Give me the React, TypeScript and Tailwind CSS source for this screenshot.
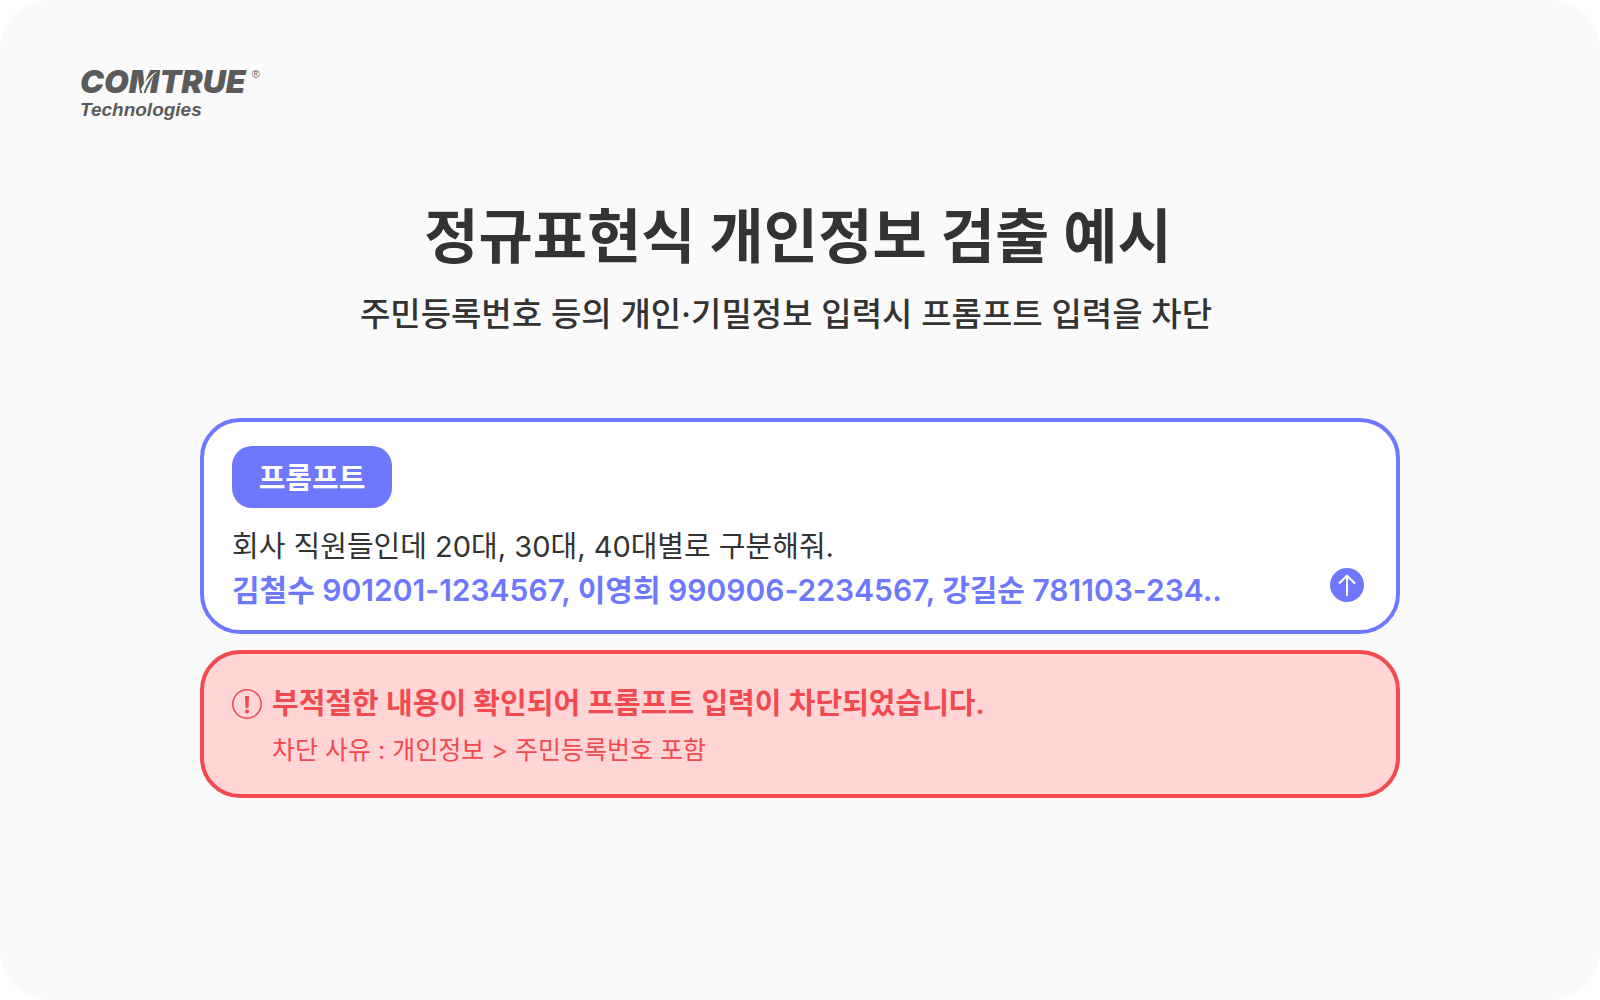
function Logo() {
  return (
    <div className="flex flex-col items-start font-bold text-[#5b5b5b] italic">
      <div className="flex items-start gap-1.5">
        <div className="relative">
          <span className="block font-[Inter,sans-serif] text-[32px] leading-7 font-black">COMTRUE</span>
          <svg className="absolute top-0 left-12 h-7 w-8" viewBox="0 0 32 28" aria-hidden="true">
            <path d="M15 27C18 17 22 9 30 3C23 6 17 13 13 21Z" fill="#fafafa" />
          </svg>
        </div>
        <span className="font-['Liberation_Sans',sans-serif] text-[11px] leading-3 font-normal not-italic">®</span>
      </div>
      <span className="font-['Liberation_Sans',sans-serif] text-[19px] leading-7">Technologies</span>
    </div>
  );
}

function SendButton() {
  return (
    <button type="button" aria-label="전송" className="size-[34px] shrink-0 rounded-full bg-[#6e78ff]">
      <svg viewBox="0 0 34 34" className="size-full" fill="none" stroke="white" strokeWidth="2" aria-hidden="true">
        <path d="M17 28V8M9 15.5L17 7.7L25 15.5" />
      </svg>
    </button>
  );
}

function AlertIcon() {
  return (
    <svg viewBox="0 0 30 30" className="size-[30px] shrink-0" fill="none" stroke="#f24a4e" aria-hidden="true">
      <circle cx="15" cy="15" r="14.2" strokeWidth="1.6" />
      <path d="M13 7H17L16.4 19H13.6Z" fill="#f24a4e" stroke="none" />
      <circle cx="15" cy="22.4" r="2" fill="#f24a4e" stroke="none" />
    </svg>
  );
}

export default function App() {
  return (
    <div className="bg-white font-[Inter,'Noto_Sans_CJK_KR',sans-serif] text-[#333]">
      <main className="flex min-h-screen flex-col rounded-[48px] bg-[#fafafa] pt-[68px]">
        <header className="px-20">
          <Logo />
        </header>

        <section className="mt-[68px] text-center">
          <h1 className="pr-1 text-[59px] leading-[90px] font-bold">정규표현식 개인정보 검출 예시</h1>
          <p className="pr-7 text-[33px] leading-[64px] font-medium">
            주민등록번호 등의 개인·기밀정보 입력시 프롬프트 입력을 차단
          </p>
        </section>

        <section className="mx-auto mt-[72px] flex w-3/4 flex-col gap-4">
          <article className="rounded-[40px] border-4 border-[#6e78ff] bg-white px-7 pt-6 pb-[18px]">
            <h2 className="flex h-[62px] w-40 items-center justify-center rounded-[20px] bg-[#6e78ff] pt-1 text-[29px] font-semibold text-white">
              프롬프트
            </h2>
            <div className="mt-4 flex items-end justify-between pr-1">
              <div className="pt-px leading-[44px]">
                <p className="text-[29px]">회사 직원들인데 20대, 30대, 40대별로 구분해줘.</p>
                <p className="text-[30px] leading-[43px] font-semibold text-[#6e78ff]">
                  김철수 901201-1234567, 이영희 990906-2234567, 강길순 781103-234..
                </p>
              </div>
              <div className="flex pb-2.5">
                <SendButton />
              </div>
            </div>
          </article>

          <article role="alert" className="rounded-[40px] border-4 border-[#f24a4e] bg-[#ffd5d6] px-7 pt-[26px] pb-[22px] text-[#f24a4e]">
            <div className="flex items-center gap-2.5">
              <AlertIcon />
              <p className="text-[29px] leading-[48px] font-semibold">
                부적절한 내용이 확인되어 프롬프트 입력이 차단되었습니다.
              </p>
            </div>
            <p className="pl-10 text-[25px] leading-[44px]">차단 사유 : 개인정보 &gt; 주민등록번호 포함</p>
          </article>
        </section>
      </main>
    </div>
  );
}
